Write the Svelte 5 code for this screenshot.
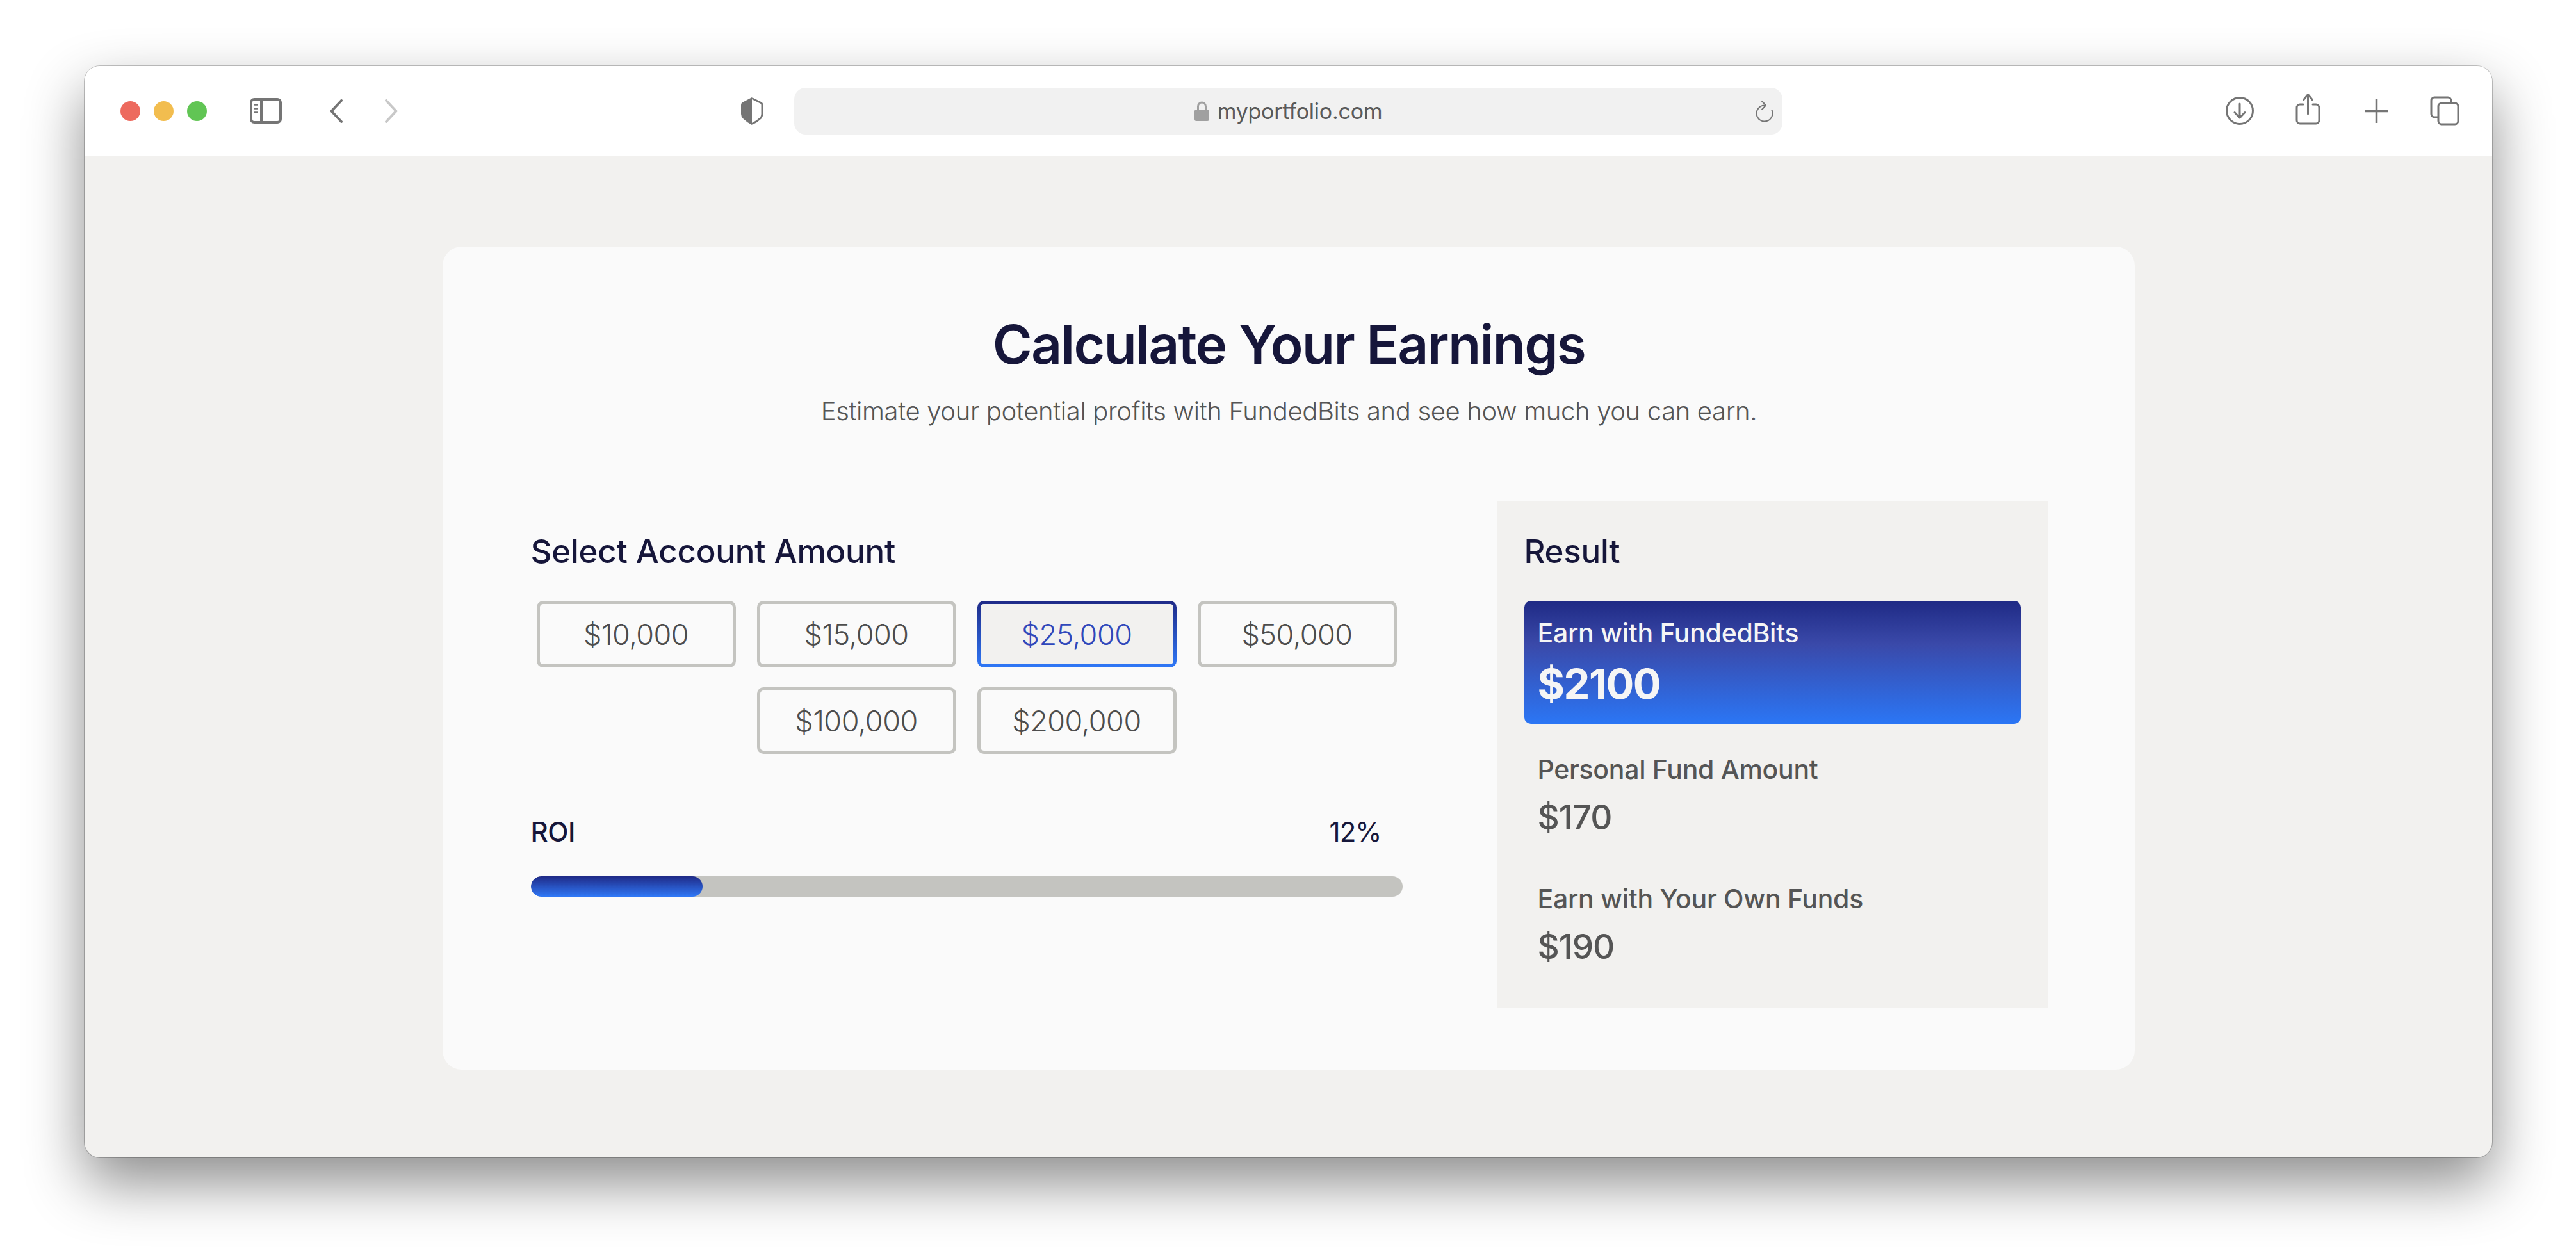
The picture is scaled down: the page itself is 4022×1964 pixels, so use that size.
<script>
  const amounts = ["$10,000", "$15,000", "$25,000", "$50,000", "$100,000", "$200,000"];
  let selected = $state("$25,000");
  const roiFill = 19.7;
  const results = [
    { label: "Personal Fund Amount", value: "$170" },
    { label: "Earn with Your Own Funds", value: "$190" }
  ];
</script>

<div class="page">
  <div class="window">
    <header class="toolbar">
      <div class="dots">
        <span class="dot red"></span>
        <span class="dot yellow"></span>
        <span class="dot green"></span>
      </div>
      <svg class="sidebar-icon" width="50" height="40" viewBox="0 0 50 40" fill="none" stroke="#757575" stroke-width="4">
        <rect x="2" y="2" width="46" height="36" rx="5" />
        <path d="M18 2V38" />
        <path d="M7 10.500H13M7 16.500H13M7 22.500H13" stroke-width="2.500" />
      </svg>
      <svg class="back" width="20" height="37" viewBox="0 0 20 37" fill="none" stroke="#757575" stroke-width="4" stroke-linecap="round" stroke-linejoin="round">
        <path d="M18 2L2.500 18.500L18 35" />
      </svg>
      <svg class="forward" width="20" height="37" viewBox="0 0 20 37" fill="none" stroke="#c8c8c8" stroke-width="4" stroke-linecap="round" stroke-linejoin="round">
        <path d="M2 2L17.500 18.500L2 35" />
      </svg>
      <svg class="shield" width="36" height="44" viewBox="0 0 36 44">
        <path d="M18 1L3 9Q1 10 1 13V27Q1 31 4 34Q10 40 18 44Z" fill="#757575" />
        <path d="M18 2.500L32 9.500Q34 10.500 34 13V27Q34 30 32 33Q26 39 18 42.500" fill="none" stroke="#757575" stroke-width="3" />
      </svg>
      <div class="url">
        <div class="address">
          <svg width="23" height="31" viewBox="0 0 23 31" fill="none">
            <path d="M5.500 14V8A6 6 0 0 1 17.500 8V14" stroke="#a0a0a0" stroke-width="3" />
            <rect y="13" width="23" height="18" rx="3" fill="#a0a0a0" />
          </svg>
          <span>myportfolio.com</span>
        </div>
        <svg class="reload" width="28" height="33" viewBox="0 0 28 33" fill="none" stroke="#757575" stroke-width="2" stroke-linecap="round" stroke-linejoin="round">
          <path d="M15 7.500A12.500 12.500 0 1 0 26.500 15" />
          <path d="M11 1L17 7.500L11 14" />
        </svg>
      </div>
      <div class="actions">
        <svg width="44" height="44" viewBox="0 0 44 44" fill="none" stroke="#757575" stroke-width="3" stroke-linecap="round" stroke-linejoin="round">
          <circle cx="22" cy="22" r="20.500" />
          <path d="M22 11V32M14 24.500L22 33L30 24.500" />
        </svg>
        <svg class="share" width="39" height="49" viewBox="0 0 39 49" fill="none" stroke="#757575" stroke-width="3" stroke-linecap="round" stroke-linejoin="round">
          <path d="M12 17H7A5 5 0 0 0 2 22V42A5 5 0 0 0 7 47H32A5 5 0 0 0 37 42V22A5 5 0 0 0 32 17H27" />
          <path d="M19.500 32V2M12.500 10L19.500 1.500L26.500 10" />
        </svg>
        <svg class="plus" width="35" height="37" viewBox="0 0 35 37" fill="none" stroke="#757575" stroke-width="3.500">
          <path d="M17.500 0V37M0 18.500H35" />
        </svg>
        <svg class="tabs" width="46" height="46" viewBox="0 0 46 46" fill="none" stroke="#757575" stroke-width="3">
          <path d="M12 33H7A5 5 0 0 1 2 28V7A5 5 0 0 1 7 2H28A5 5 0 0 1 33 7V11" />
          <rect x="13" y="11" width="31" height="33" rx="5" />
        </svg>
      </div>
    </header>

    <main class="content">
      <section class="card">
        <h1>Calculate Your Earnings</h1>
        <p class="sub">Estimate your potential profits with FundedBits and see how much you can earn.</p>

        <div class="columns">
          <div class="left">
            <h2>Select Account Amount</h2>
            <div class="amounts">
              {#each amounts as amount}
                <button class="amount" class:active={selected === amount} onclick={() => (selected = amount)}>{amount}</button>
              {/each}
            </div>
            <div class="roi">
              <span>ROI</span>
              <span class="roi-value">12%</span>
            </div>
            <div class="track">
              <div class="fill" style="width: {roiFill}%"></div>
            </div>
          </div>

          <aside class="panel">
            <h2>Result</h2>
            <div class="highlight">
              <div class="label">Earn with FundedBits</div>
              <div class="big">$2100</div>
            </div>
            {#each results as row}
              <div class="row">
                <div class="label">{row.label}</div>
                <div class="value">{row.value}</div>
              </div>
            {/each}
          </aside>
        </div>
      </section>
    </main>
  </div>
</div>

<style>
  :global(body) {
    background: #fff;
    overflow: hidden;
  }
  .page {
    box-sizing: border-box;
    height: 1964px;
    padding: 103px 131px 0 132px;
    font-family: Inter, "Liberation Sans", sans-serif;
    overflow: hidden;
  }
  .window {
    height: 1704px;
    border-radius: 24px;
    overflow: hidden;
    background: #f2f1ef;
    box-shadow: 0 0 0 1px rgba(0, 0, 0, 0.22), 0 40px 90px rgba(0, 0, 0, 0.45);
  }
  .toolbar {
    height: 140px;
    background: #fff;
    display: flex;
    align-items: center;
    padding: 0 51px 0 56px;
  }
  .dots {
    display: flex;
    gap: 21px;
  }
  .dot {
    width: 31px;
    height: 31px;
    border-radius: 50%;
  }
  .red { background: #ed6a5e; }
  .yellow { background: #f2bd4f; }
  .green { background: #61c554; }
  .sidebar-icon { margin-left: 67px; }
  .back { margin-left: 75px; }
  .forward { margin-left: 66px; }
  .shield { margin-left: 535px; }
  .url {
    margin-left: 48px;
    width: 1543px;
    height: 73px;
    border-radius: 18px;
    background: #f1f1f1;
    display: grid;
    grid-template-columns: 1fr auto 1fr;
    align-items: center;
    box-sizing: border-box;
    padding: 0 15px;
  }
  .address {
    grid-column: 2;
    display: flex;
    align-items: center;
    gap: 13px;
    font-size: 34px;
    letter-spacing: -0.25px;
    color: #5a5a5a;
  }
  .reload {
    grid-column: 3;
    justify-self: end;
  }
  .actions {
    margin-left: auto;
    display: flex;
    align-items: center;
  }
  .share { margin-left: 65px; margin-top: -5px; }
  .plus { margin-left: 70px; }
  .tabs { margin-left: 66px; }
  .content {
    padding-top: 142px;
    display: flex;
    justify-content: center;
  }
  .card {
    box-sizing: border-box;
    width: 2642px;
    height: 1285px;
    border-radius: 30px;
    background: #fafafa;
    padding: 103px 136px 96px 138px;
  }
  h1 {
    margin: 0;
    font-size: 84px;
    line-height: 100px;
    font-weight: 600;
    letter-spacing: -1.85px;
    color: #16163a;
    text-align: center;
  }
  .sub {
    margin: 24px 0 0;
    font-size: 40px;
    line-height: 60px;
    font-weight: 300;
    letter-spacing: -0.35px;
    color: #555;
    text-align: center;
  }
  .columns {
    margin-top: 110px;
    display: flex;
    justify-content: space-between;
  }
  .left {
    width: 1361px;
    padding-top: 44px;
  }
  h2 {
    margin: 0;
    font-size: 51px;
    line-height: 70px;
    font-weight: 500;
    letter-spacing: -0.25px;
    color: #16163a;
  }
  .amounts {
    margin-top: 42px;
    display: flex;
    flex-wrap: wrap;
    justify-content: center;
    gap: 31px 33px;
  }
  .amount {
    box-sizing: border-box;
    width: 311px;
    height: 104px;
    border: 5px solid #c4c4c0;
    border-radius: 10px;
    background: #fafafa;
    font: inherit;
    font-size: 45px;
    font-weight: 300;
    letter-spacing: -0.5px;
    color: #4d4d4d;
    padding: 0;
  }
  .amount.active {
    border-color: transparent;
    background: linear-gradient(#f2f1ef, #f2f1ef) padding-box, linear-gradient(180deg, #1f2a87, #2f78f7) border-box;
    color: #3048bb;
  }
  .roi {
    margin-top: 92px;
    display: flex;
    justify-content: space-between;
    font-size: 42px;
    line-height: 60px;
    font-weight: 500;
    letter-spacing: -0.5px;
    color: #16163a;
  }
  .roi-value {
    margin-right: 33px;
    font-weight: 400;
    letter-spacing: -1px;
  }
  .track {
    margin-top: 39px;
    height: 32px;
    border-radius: 16px;
    background: #c4c4c0;
    overflow: hidden;
  }
  .fill {
    height: 100%;
    border-radius: 16px;
    background: linear-gradient(180deg, #1f2a87, #2f78f7);
  }
  .panel {
    box-sizing: border-box;
    width: 859px;
    height: 792px;
    padding: 44px 42px 0;
    background: #f2f1ef;
  }
  .highlight {
    margin-top: 42px;
    height: 192px;
    box-sizing: border-box;
    padding: 25px 21px 0;
    border-radius: 10px;
    background: linear-gradient(180deg, #1f2a85 0%, #3a49a9 35%, #2b76f5 100%);
    color: #f5f5f5;
  }
  .label {
    font-size: 41px;
    line-height: 50px;
    font-weight: 500;
    letter-spacing: -0.3px;
  }
  .big {
    margin-top: 17px;
    font-size: 65px;
    line-height: 76px;
    font-weight: 700;
    letter-spacing: -1.5px;
  }
  .row {
    margin-top: 46px;
    padding: 0 21px;
    color: #555;
  }
  .row + .row {
    margin-top: 70px;
  }
  .value {
    margin-top: 18px;
    font-size: 53px;
    line-height: 64px;
    font-weight: 500;
    letter-spacing: -1px;
  }
</style>
